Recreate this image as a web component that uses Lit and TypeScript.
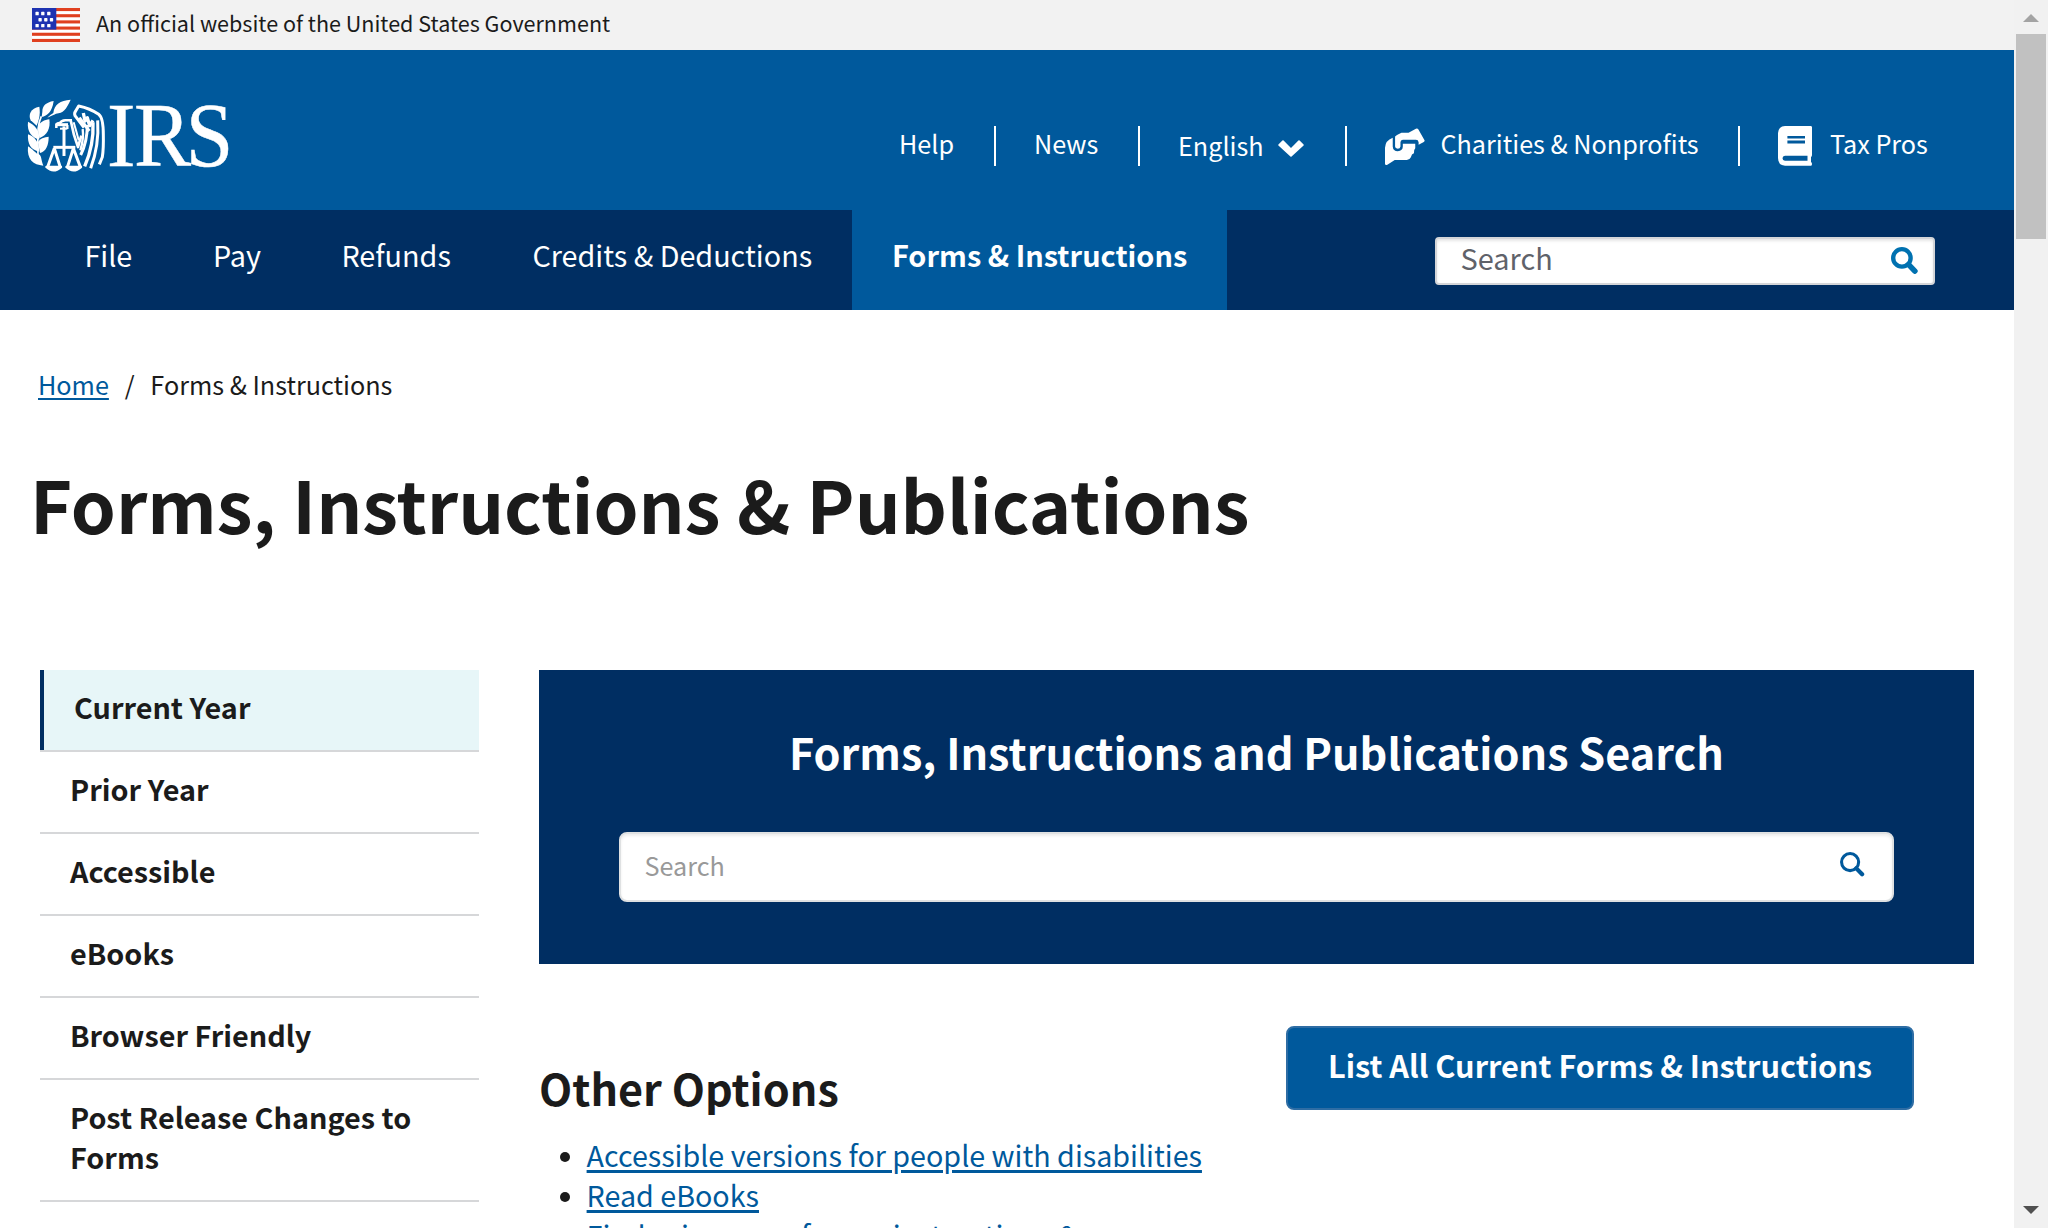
import { LitElement, html, css, svg } from "lit";
import { customElement } from "lit/decorators.js";
import { classMap } from "lit/directives/class-map.js";

const FACE = css`"Noto Sans CJK SC", "Open Sans", sans-serif`;

const magnifier = (cls: string, stroke: number) => svg`
  <svg class=${cls} viewBox="0 0 26 26" fill="none" stroke="currentColor" stroke-width=${stroke}>
    <circle cx="10.5" cy="10.5" r=${10.5 - stroke / 2}></circle>
    <path d="M17 17 L23 23.2" stroke-width=${stroke + 1.2} stroke-linecap="round"></path>
  </svg>`;

@customElement("gov-banner")
class GovBanner extends LitElement {
  static styles = css`
    :host { display: flex; height: 50px; padding-left: 32px; background: #f2f2f2; box-sizing: border-box; }
    .flag { width: 48px; height: 34px; margin: 8px 16px 0 0; }
    .text { font: 400 21.56px/45px ${FACE}; color: #1b1b1b; }
  `;
  render() {
    const stars = [[1.7, 1.8], [3.6, 1.8], [5.6, 1.8], [2.7, 3.8], [4.6, 3.8], [6.5, 3.8], [1.7, 5.7], [3.6, 5.7], [5.6, 5.7]];
    return html`
      <svg class="flag" viewBox="0 0 16 11" preserveAspectRatio="none">
        <rect width="16" height="11" fill="#fff"></rect>
        ${[0, 2, 4, 6, 8, 10].map((y) => svg`<rect y=${y} width="16" height="1" fill="#e0401f"></rect>`)}
        <rect width="8.1" height="7" fill="#1e33b1"></rect>
        ${stars.map(([x, y]) => svg`<rect x=${x - 0.55} y=${y - 0.55} width="1.1" height="1.1" rx=".2" fill="#fff"></rect>`)}
      </svg>
      <span class="text">An official website of the United States Government</span>
    `;
  }
}

@customElement("site-header")
class SiteHeader extends LitElement {
  static styles = css`
    :host { display: block; color: #fff; }
    .top { display: flex; height: 160px; background: #00599c; }
    .logo { width: 240px; height: 100px; margin: 35px 0 0 10px; flex: none; }
    .util { display: grid; grid-template-columns: 97px 144px 207px 393px auto; height: 40px; margin: 76px 0 0 649px;
      font: 400 25.2px/34px ${FACE}; }
    .u { display: flex; box-sizing: border-box; padding-left: 38px; border-right: 2px solid #fff; white-space: nowrap; }
    .u.first { padding-left: 0; }
    .u.last { border: 0; padding-left: 38px; }
    .u.lang { line-height: 38px; }
    .chev { width: 26px; height: 17px; margin: 14px 0 0 14.4px; }
    .hands { width: 40px; height: 37px; margin: 1.6px 15.5px 0 0; }
    .book { width: 34px; height: 40px; margin-right: 18px; }
    .bar { display: flex; height: 100px; background: #002e62; }
    .menu { display: grid; grid-template-columns: 128.5px 128.5px 191px 361px 375px; margin-left: 43px;
      font: 400 28.75px/90px ${FACE}; }
    .m { padding-left: 41.4px; white-space: nowrap; }
    .m.on { background: #00599c; padding-left: 40px; font-weight: 700; font-size: 28.9px; line-height: 88px; }
    .search { display: flex; justify-content: space-between; box-sizing: border-box; width: 500px; height: 48px;
      margin: 27px 0 0 208px; padding: 0 15.4px 0 23.6px; background: #fff; border: 2px solid #d4d5d8; border-radius: 4px;
      box-shadow: inset 0 2px 3px rgba(0,0,0,.1); color: #5f626a; font: 400 28.9px/36px ${FACE}; }
    .mag { width: 27px; height: 27px; margin-top: 8px; color: #0071b0; }
  `;
  render() {
    const menu = ["File", "Pay", "Refunds", "Credits & Deductions", "Forms & Instructions"];
    return html`
      <div class="top">
        <svg class="logo" viewBox="0 0 720 300" fill="#fff">
          <path d="M182 44 C150 46 133 58 130 84 C124 88 118 91 112 98 C124 92 130 90 138 86 C160 84 168 74 182 44Z"></path>
          <path d="M131 48 C108 52 97 62 97 80 L95 96 C112 92 126 82 131 48Z"></path>
          <path d="M88 65 C62 70 54 88 62 106 L80 122 C86 106 92 90 88 65Z"></path>
          <path d="M84 126 C88 112 104 104 118 103 C122 130 112 150 88 160Z"></path>
          <path d="M54 110 C76 122 88 134 88 164 C66 158 50 140 54 110Z"></path>
          <path d="M84 172 C88 160 104 156 116 155 C116 182 108 198 90 204Z"></path>
          <path d="M54 148 C74 156 86 168 88 200 C62 196 52 176 54 148Z"></path>
          <path d="M54 184 C70 194 76 204 82 206 C96 208 92 222 100 242 C70 240 50 224 54 184Z"></path>
          <path d="M94 94 C84 116 82 130 84 210" fill="none" stroke="#fff" stroke-width="5"></path>
          <g fill="none" stroke="#fff" stroke-width="7.5" stroke-linejoin="round">
            <path d="M139 129 L139 118 Q143 113 150 114 Q154 107 166 106 H186"></path>
            <path d="M140 119 H174" stroke-width="9"></path>
            <path d="M172 120 V132" stroke-width="7"></path>
            <path d="M162 124 V213" stroke-width="9"></path>
            <path d="M150 131 H172" stroke-width="6"></path>
            <path d="M130 187 H196" stroke-width="9"></path>
            <path d="M133 190 L113 246 M133 190 L150 244 M190 190 L173 244 M190 190 L211 246" stroke-width="9"></path>
            <path d="M109 246 H153 Q130 266 109 246Z M169 246 H213 Q190 266 169 246Z" fill="#fff" stroke-width="7"></path>
            <path d="M182 106 Q190 150 204 186 L214 152" stroke-width="8"></path>
            <path d="M191 112 Q200 142 206 166" stroke-width="6"></path>
            <path d="M222 128 L195 92 Q192 84 197 78 L206 63 Q240 70 266 88 Q280 98 280 150 Q281 190 277 216 L268 238" stroke-width="9"></path>
            <path d="M220 84 L225 108 L232 98 L239 122 L249 106" stroke-width="10"></path>
            <path d="M208 98 L238 138" stroke-width="9"></path>
            <path d="M232 120 Q232 170 212 210" stroke-width="9"></path>
            <path d="M249 112 Q252 180 224 244" stroke-width="10"></path>
            <path d="M263 106 Q268 180 242 250" stroke-width="9"></path>
            <path d="M218 132 Q222 160 211 196" stroke-width="7"></path>
          </g>
          <text transform="translate(291 242) scale(.94 1)" x="0 86 251" font-family="Liberation Serif, serif"
            font-size="273" stroke="#fff" stroke-width="1.5">IRS</text>
        </svg>
        <nav class="util">
          <div class="u first">Help</div>
          <div class="u">News</div>
          <div class="u lang">English
            <svg class="chev" viewBox="0 0 26 17" fill="#fff"><path d="M0.4 4.6 L4.4 .5 Q5 0 5.6 .5 L13 8 L20.4 .5 Q21 0 21.6 .5 L25.6 4.6 Q26 5 25.6 5.5 L13.6 16.6 Q13 17 12.4 16.6 L.4 5.5 Q0 5 .4 4.6Z"></path></svg>
          </div>
          <div class="u">
            <svg class="hands" viewBox="45 37 119 110" preserveAspectRatio="none" fill="#fff">
              <path d="M45 144 V96 Q46 74 68 66 V92 Q69 106 83 106 Q98 105 98 92 V84 H135 V97 Q131 100 131 112 Q124 114 122 124 Q118 132 110 132 H74 L52 146 Q46 148 45 144Z"></path>
              <path d="M75 92 V62 Q80 57 88 54 L94 51 H115 L137 39 Q142 37 144 41 L163 74 Q163 78 159 79 L145 87 V79 Q144 72 137 72 H98 Q91 73 91 79 V92 Q90 99 83 99 Q75 98 75 92Z"></path>
            </svg>
            <span>Charities &amp; Nonprofits</span>
          </div>
          <div class="u last">
            <svg class="book" viewBox="0 0 34 40">
              <path fill="#fff" d="M7 0 H33 Q34 0 34 1.5 V29 Q34 30.4 33 31 V36 Q34 36.6 34 38 Q34 39.7 33 39.7 H7 Q0 39.3 0 32 V7 Q.4 .4 7 0Z"></path>
              <path fill="#00599c" d="M9.4 10 H27 V12.6 H9.4Z M9.4 14.6 H27 V17.4 H9.4Z M7 29.8 H29.5 V34.8 H7 Q4.5 34.6 4.5 32.3 Q4.5 30 7 29.8Z"></path>
            </svg>
            <span>Tax Pros</span>
          </div>
        </nav>
      </div>
      <div class="bar">
        <nav class="menu">
          ${menu.map((t, i) => html`<div class=${classMap({ m: true, on: i === 4 })}>${t}</div>`)}
        </nav>
        <div class="search"><span>Search</span>${magnifier("mag", 4.2)}</div>
      </div>
    `;
  }
}

@customElement("side-menu")
class SideMenu extends LitElement {
  static styles = css`
    :host { display: block; width: 439px; flex: none; font: 700 28.8px/40px ${FACE}; color: #1b1b1b; }
    .item { padding: 17px 24px 23px 30px; border-bottom: 2px solid #d6d7d9; }
    .current { display: flex; border-bottom: 2px solid #d6d7d9; }
    .mark { width: 4px; background: #002e62; }
    .label { flex: 1; padding: 17px 24px 23px 30px; background: #e7f6f8; }
  `;
  render() {
    return html`
      <div class="current"><div class="mark"></div><div class="label">Current Year</div></div>
      ${["Prior Year", "Accessible", "eBooks", "Browser Friendly", "Post Release Changes to Forms"].map(
        (t) => html`<div class="item">${t}</div>`,
      )}
    `;
  }
}

@customElement("forms-panel")
class FormsPanel extends LitElement {
  static styles = css`
    :host { display: block; width: 1435px; flex: none; color: #1b1b1b; }
    .panel { box-sizing: border-box; height: 294px; padding: 51px 80px 0; background: #002e62; }
    .title { margin: 0 0 51px; text-align: center; color: #fff; font: 700 43.2px/60px ${FACE}; }
    .field { display: flex; justify-content: space-between; box-sizing: border-box; height: 70px; padding: 0 27px 0 23.5px;
      background: #fff; border: 2px solid #dfe1e2; border-radius: 8px; box-shadow: inset 0 2px 3px rgba(0,0,0,.075);
      color: #999; font: 400 25.2px/62px ${FACE}; }
    .mag { width: 25px; height: 25px; margin-top: 18px; color: #00599c; }
    .lower { display: flex; justify-content: space-between; align-items: flex-start; padding: 62px 60px 0 0; }
    .heading { margin: 31px 0 17.5px; font: 700 43.15px/60px ${FACE}; }
    .list { margin: 0; padding: 0 0 0 21px; list-style: none; font: 400 28.68px/40px ${FACE}; }
    .row { display: flex; align-items: center; gap: 16.6px; white-space: nowrap; }
    .dot { width: 10px; height: 10px; margin-top: 5px; border-radius: 50%; background: #1b1b1b; }
    .link { color: #00599c; text-decoration: underline; text-decoration-thickness: 3px; text-underline-offset: 3px; }
    .btn { box-sizing: border-box; width: 628px; height: 84px; border: 2px solid #2e6da4; border-radius: 8px;
      background: #00599c; color: #fff; text-align: center; font: 700 30.7px/74px ${FACE}; }
  `;
  render() {
    const links = ["Accessible versions for people with disabilities", "Read eBooks", "Find prior years forms, instructions &"];
    return html`
      <section class="panel">
        <h2 class="title">Forms, Instructions and Publications Search</h2>
        <div class="field"><span>Search</span>${magnifier("mag", 3.2)}</div>
      </section>
      <section class="lower">
        <div>
          <h2 class="heading">Other Options</h2>
          <ul class="list">
            ${links.map((t) => html`<li class="row"><span class="dot"></span><a class="link">${t}</a></li>`)}
          </ul>
        </div>
        <div class="btn">List All Current Forms &amp; Instructions</div>
      </section>
    `;
  }
}

@customElement("scroll-track")
class ScrollTrack extends LitElement {
  static styles = css`
    :host { display: flex; flex-direction: column; align-items: center; box-sizing: border-box; width: 34px; flex: none;
      background: #f1f1f1; padding: 14px 0; }
    .thumb { width: 30px; height: 205px; margin: 12px 0 auto; background: #c1c1c1; }
    .arrow { width: 16px; height: 8px; display: block; }
  `;
  render() {
    return html`
      <svg class="arrow" viewBox="0 0 16 8" fill="#a3a3a3"><path d="M8 0 L16 8 H0Z"></path></svg>
      <div class="thumb"></div>
      <svg class="arrow" viewBox="0 0 16 8" fill="#505050"><path d="M0 0 H16 L8 8Z"></path></svg>
    `;
  }
}

@customElement("app-root")
class AppRoot extends LitElement {
  static styles = css`
    :host { display: flex; height: 1228px; overflow: hidden; background: #fff; color: #1b1b1b; }
    .page { width: 2014px; flex: none; }
    .crumbs { display: flex; padding: 54px 0 0 38px; font: 400 25.2px/40px ${FACE}; }
    .home { color: #00599c; text-decoration: underline; text-decoration-thickness: 2px; text-underline-offset: 3px; }
    .sep { margin: 0 15.8px; }
    .h1 { margin: 49px 0 117px 30px; font: 700 72.1px/100px ${FACE}; }
    .cols { display: flex; gap: 60px; padding-left: 40px; }
  `;
  render() {
    return html`
      <div class="page">
        <gov-banner></gov-banner>
        <site-header></site-header>
        <div class="crumbs"><a class="home">Home</a><span class="sep">/</span><span>Forms &amp; Instructions</span></div>
        <h1 class="h1">Forms, Instructions &amp; Publications</h1>
        <div class="cols"><side-menu></side-menu><forms-panel></forms-panel></div>
      </div>
      <scroll-track></scroll-track>
    `;
  }
}
